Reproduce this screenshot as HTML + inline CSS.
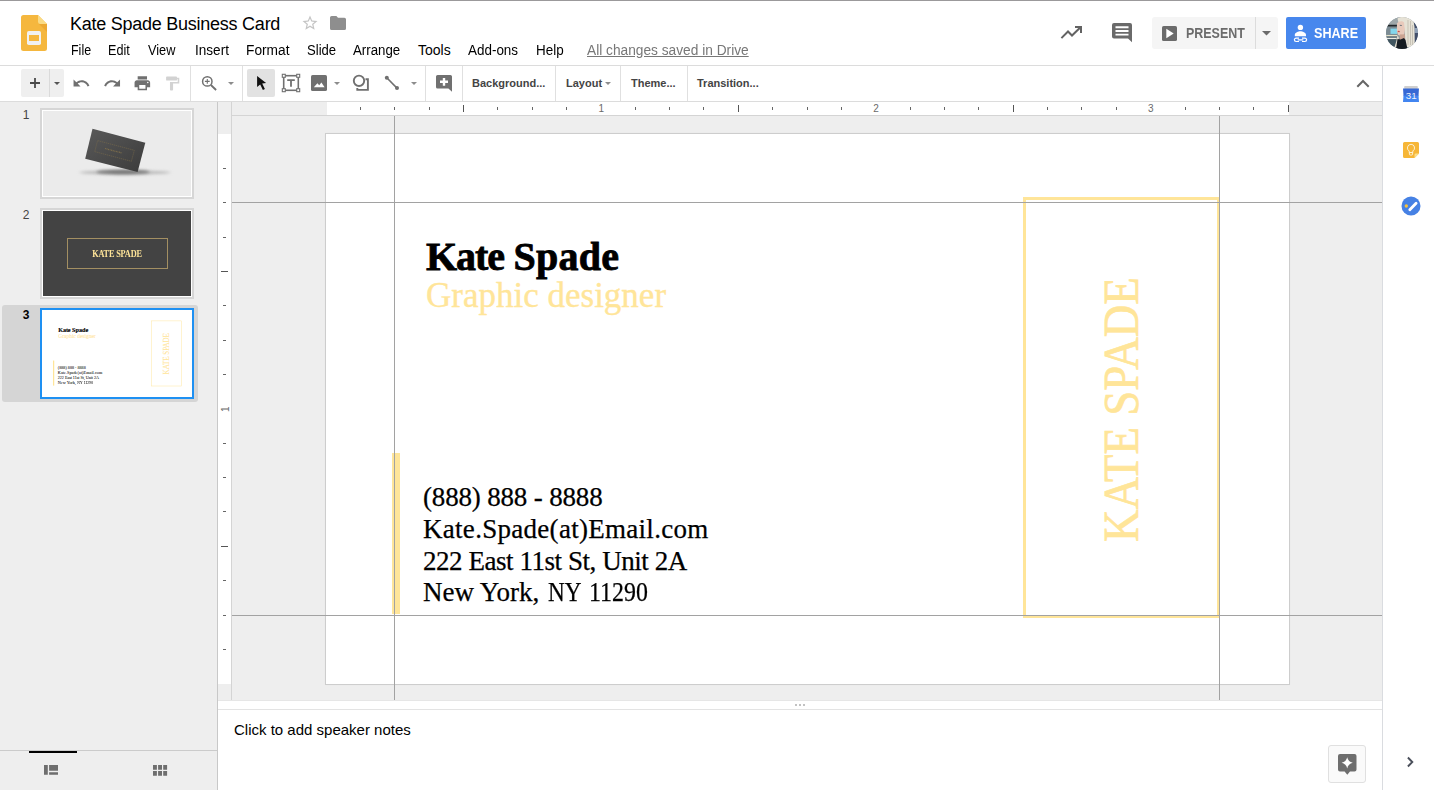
<!DOCTYPE html>
<html><head><meta charset="utf-8"><title>Kate Spade Business Card</title>
<style>
*{box-sizing:border-box;margin:0;padding:0}
html,body{width:1434px;height:790px;overflow:hidden;background:#fff;font-family:"Liberation Sans",sans-serif;color:#000}
.abs,body>div,body>svg{position:absolute}
#topline{left:0;top:0;width:1434px;height:1px;background:#9b999b}
#hdrborder{left:0;top:65px;width:1434px;height:1px;background:#dcdcdc}
#title{left:70px;top:12.500px;font-size:18px;line-height:22px;letter-spacing:-.25px;white-space:nowrap;color:#000}
.menu{position:absolute;transform-origin:0 0;top:41px;font-size:14px;line-height:18px;white-space:nowrap;color:#000}
#saved{color:#777;text-decoration:underline}
#tbborder{left:0;top:101px;width:1383px;height:1px;background:#dcdcdc}
.tsep{position:absolute;top:66px;width:1px;height:35px;background:#e0e0e0}
.tbtxt{position:absolute;top:75px;font-size:11px;line-height:16px;font-weight:bold;color:#444;white-space:nowrap}
.dd{position:absolute;top:82px;width:0;height:0;border-left:3px solid transparent;border-right:3px solid transparent;border-top:3px solid #8c8c8c}
#left{left:0;top:102px;width:217px;height:688px;background:#eeeeee}
#leftborder{left:217px;top:102px;width:1px;height:688px;background:#c8c8c8}
#canvas{left:218px;top:102px;width:1164px;height:598px;background:#eeeeee}
#rightborder{left:1382px;top:66px;width:1px;height:724px;background:#dadce0}
#slide{left:326px;top:134px;width:963px;height:550px;background:#fff;box-shadow:0 0 0 1px #cdcdcd,0 0 2px rgba(0,0,0,.15)}
#slidecontent{top:-1px}
.sc{position:absolute;left:0;top:0;width:963px;height:552px;overflow:hidden;font-family:"Liberation Serif",serif}
.sc div{position:absolute;white-space:nowrap}
.gold{color:#ffe599}
.name{left:100px;top:100.500px;font-size:40px;line-height:46px;letter-spacing:-.3px;font-weight:bold;color:#000;-webkit-text-stroke:.8px #000}
.role{left:100px;top:143px;font-size:35px;line-height:40px;-webkit-text-stroke:.35px #ffe599}
.ct{left:97px;font-size:27px;line-height:32px;color:#000;-webkit-text-stroke:.25px #000}
.bar{left:65.700px;top:320px;width:8.500px;height:161px;background:#ffe599}
.box{left:697px;top:64px;width:197px;height:421px;border:3px solid #ffe599}
.vert{left:0;top:0;font-size:50px;line-height:50px;transform-origin:0 0;-webkit-text-stroke:.7px #ffe599}
#notes{left:218px;top:700px;width:1164px;height:90px;background:#fff}
#notesline{left:218px;top:709px;width:1164px;height:1px;background:#e3e3e3}
#notestxt{left:234px;top:721px;font-size:15px;line-height:18px;white-space:nowrap;color:#000}
.guide{background:#a2a2a2}
.thumb{position:absolute;left:40px;width:154px;height:91px;border:2px solid #d6d6d6;background:#fff}
.thumb>i{font-style:normal;position:absolute;left:1px;top:1px;right:1px;bottom:1px;display:block;overflow:hidden}
.num{position:absolute;left:18px;width:16px;text-align:center;font-size:12px;line-height:14px;color:#444}
</style></head><body>
<div id="topline"></div>
<div id="hdrborder"></div>
<div id="title">Kate Spade Business Card</div>
<div class="menu" style="left:71px;transform:scaleX(0.89)">File</div>
<div class="menu" style="left:108px;transform:scaleX(0.9)">Edit</div>
<div class="menu" style="left:148px;transform:scaleX(0.91)">View</div>
<div class="menu" style="left:195px;transform:scaleX(0.97)">Insert</div>
<div class="menu" style="left:246px;transform:scaleX(0.98)">Format</div>
<div class="menu" style="left:307px;transform:scaleX(0.935)">Slide</div>
<div class="menu" style="left:353px;transform:scaleX(0.947)">Arrange</div>
<div class="menu" style="left:418px;transform:scaleX(1.0)">Tools</div>
<div class="menu" style="left:468px;transform:scaleX(0.96)">Add-ons</div>
<div class="menu" style="left:536px;transform:scaleX(0.96)">Help</div>
<div class="menu" id="saved" style="left:587px;transform:scaleX(.98)">All changes saved in Drive</div>
<div id="tbborder"></div>
<div class="tsep" style="left:190px"></div>
<div class="tsep" style="left:242px"></div>
<div class="tsep" style="left:425px"></div>
<div class="tsep" style="left:462px"></div>
<div class="tsep" style="left:555px"></div>
<div class="tsep" style="left:620px"></div>
<div class="tsep" style="left:687px"></div>
<div class="tbtxt" style="left:472px">Background...</div>
<div class="tbtxt" style="left:566px">Layout</div>
<div class="tbtxt" style="left:631px">Theme...</div>
<div class="tbtxt" style="left:697px">Transition...</div>

<!-- logo -->
<svg style="left:21px;top:15px" width="26" height="36" viewBox="0 0 26 36"><path d="M2.5 0H17l9 9v24.5a2.5 2.5 0 0 1-2.500 2.500h-21A2.500 2.500 0 0 1 0 33.500v-31A2.500 2.500 0 0 1 2.500 0z" fill="#f5b73e"/><path d="M17.500 8.500 26 17V9z" fill="#eca832"/><path d="M17 0l9 9h-6.800A2.200 2.200 0 0 1 17 6.800z" fill="#fadb85"/><rect x="6" y="16" width="14" height="14" rx="1.800" fill="#f1f1f1"/><rect x="8" y="20" width="10" height="6" fill="#f5b73e"/></svg>
<!-- star + folder -->
<svg style="left:301.200px;top:13.500px" width="18" height="18" viewBox="0 0 24 24"><path d="M22 9.240l-7.190-.62L12 2 9.190 8.630 2 9.240l5.460 4.730L5.820 21 12 17.270 18.180 21l-1.630-7.030L22 9.240zM12 15.400l-3.760 2.270 1-4.280-3.320-2.880 4.380-.38L12 6.100l1.710 4.040 4.380.38-3.320 2.880 1 4.280L12 15.400z" fill="#c4c4c4"/></svg>
<svg style="left:330px;top:16px" width="16" height="14" viewBox="0 0 16 14"><path d="M1.600 0h4.800L8 1.700h6.400A1.600 1.600 0 0 1 16 3.300v9.100a1.600 1.600 0 0 1-1.600 1.600H1.600A1.600 1.600 0 0 1 0 12.400V1.600A1.600 1.600 0 0 1 1.600 0z" fill="#8e8e8e"/></svg>
<!-- header right -->
<svg style="left:1059px;top:24px" width="24" height="17" viewBox="0 0 24 17"><path d="M2.400 14.100 9 7.500l4 4L21 3.700" fill="none" stroke="#636363" stroke-width="2"/><path d="M16 3h6v6" fill="none" stroke="#636363" stroke-width="2"/></svg>
<svg style="left:1112px;top:23px" width="20" height="20" viewBox="0 0 20 20"><path d="M2 0h16a2 2 0 0 1 2 2v17.200l-4-3.700H2a2 2 0 0 1-2-2V2a2 2 0 0 1 2-2z" fill="#6a6a6a"/><path d="M3.500 3.300h13v1.900h-13zM3.500 7h13v1.900h-13zM3.500 10.700h13v1.900h-13z" fill="#fff"/></svg>
<div style="left:1152px;top:17px;width:126px;height:32px;background:#f5f5f5;border-radius:3px"></div>
<div style="left:1255px;top:17px;width:1px;height:32px;background:#dcdcdc"></div>
<svg style="left:1162px;top:26px" width="15" height="15" viewBox="0 0 15 15"><rect width="15" height="15" rx="1.600" fill="#6b6b6b"/><path d="M4.300 2.800v9.400l7.400-4.700z" fill="#fff"/></svg>
<div id="present" style="left:1186px;top:25px;font-size:14px;line-height:16px;font-weight:bold;color:#6b6b6b;white-space:nowrap;transform:scaleX(.89);transform-origin:0 0">PRESENT</div>
<svg style="left:1262px;top:31px" width="9" height="5" viewBox="0 0 9 5"><path d="M0 0h9L4.500 4.500z" fill="#6b6b6b"/></svg>
<div style="left:1286px;top:17px;width:80px;height:32px;background:#4787ed;border-radius:2px"></div>
<svg style="left:1293px;top:24px" width="15" height="19" viewBox="0 0 15 19"><circle cx="7.400" cy="3.400" r="2.700" fill="#fff"/><path d="M1.800 12.300v-1.600c0-2.300 3.700-3.500 5.600-3.500s5.600 1.200 5.600 3.500v1.600z" fill="#fff"/><path d="M6 14.100H3.100a1.700 1.700 0 0 0 0 3.400H6M9 14.100h2.900a1.700 1.700 0 0 1 0 3.400H9M4.700 15.800h5.600" fill="none" stroke="#fff" stroke-width="1.200"/></svg>
<div id="share" style="left:1314px;top:25px;font-size:14px;line-height:16px;font-weight:bold;color:#fff;white-space:nowrap;transform:scaleX(.9);transform-origin:0 0">SHARE</div>

<svg style="left:1386px;top:17px" width="32" height="32" viewBox="0 0 32 32"><defs><clipPath id="ac"><circle cx="16" cy="16" r="16"/></clipPath><filter id="ab" x="-20%" y="-20%" width="140%" height="140%"><feGaussianBlur stdDeviation=".75"/></filter></defs><g clip-path="url(#ac)"><rect width="32" height="32" fill="#8b969b"/><g filter="url(#ab)"><rect x="0" y="0" width="12" height="7.500" fill="#9ea7aa"/><rect x="1" y="7.800" width="10.500" height="1.900" fill="#23282c"/><rect x="0" y="9.700" width="12" height="8" fill="#7b8b93"/><rect x="4.500" y="11.600" width="6.800" height="5.300" fill="#84d6ec"/><rect x="0" y="18" width="11" height="1.100" fill="#e3e2c8"/><rect x="0" y="19.300" width="11" height="1.500" fill="#6b7a80"/><rect x="0" y="21" width="10.500" height="1" fill="#ecece6"/><rect x="1" y="22.200" width="11" height="8" fill="#3f545f"/><rect x="27.500" y="4" width="5" height="22" fill="#42506b"/><rect x="28.500" y="11" width="3.500" height="5" fill="#8fa0b6"/><path d="M11.500 1.500C14 -1 24 -1 27 1l1.500 9 .3 20H19.500l-.5-12-1-7-1.500-5.500-4 .5z" fill="#e6e2d6"/><path d="M22 3v25M24.500 4v24M26.500 8v20" stroke="#b9b5a8" stroke-width=".7" fill="none"/><path d="M11 6.500c1.500-2.500 5.500-3 7-1l.8 7-.5 5-3.300 1.500-3.200-1.200-.9-4.300z" fill="#e8c9bb"/><path d="M13.800 17.400h5.200v6h-5.200z" fill="#caa392"/><path d="M11.500 18c-.5 4-1.500 8-3 12h3l1.500-9z" fill="#e1dccd"/><path d="M11.500 22l3 .5 3.500-1.500 1.500 2 2 9H10z" fill="#191a22"/><path d="M13.800 8.300l2 .2" stroke="#5d6b78" stroke-width=".9"/><path d="M11.800 14.300l1.900.4" stroke="#c6554d" stroke-width="1.300"/></g></g></svg>
<!-- toolbar icons -->
<div style="left:21px;top:69px;width:43px;height:28px;background:#efefef;border-radius:2px"></div>
<div style="left:49px;top:69px;width:1px;height:28px;background:#dadada"></div>
<svg style="left:29px;top:77px" width="12" height="12" viewBox="0 0 12 12"><path d="M5.100 1h1.800v4.100H11v1.800H6.900V11H5.100V6.900H1V5.100h4.100z" fill="#4a4a4a"/></svg>
<div class="dd" style="left:54px;border-top-color:#555"></div>
<svg style="left:72.350px;top:73.500px" width="18.600" height="18.600" viewBox="0 0 24 24"><path d="M12.500 8c-2.650 0-5.050.99-6.900 2.600L2 7v9h9l-3.620-3.620c1.390-1.160 3.160-1.880 5.120-1.880 3.540 0 6.550 2.310 7.600 5.500l2.370-.78C21.080 11.030 17.150 8 12.500 8z" fill="#707070"/></svg>
<svg style="left:102.900px;top:73.500px" width="18.600" height="18.600" viewBox="0 0 24 24"><path d="M18.400 10.600C16.550 8.990 14.150 8 11.500 8c-4.650 0-8.580 3.030-9.960 7.220L3.900 16c1.050-3.190 4.050-5.500 7.600-5.500 1.950 0 3.730.72 5.120 1.880L13 16h9V7l-3.600 3.600z" fill="#707070"/></svg>
<svg style="left:132.500px;top:73.700px" width="18.700" height="18.700" viewBox="0 0 24 24"><path d="M19 8H5c-1.660 0-3 1.340-3 3v6h4v4h12v-4h4v-6c0-1.660-1.340-3-3-3zm-3 11H8v-5h8v5zm3-7c-.55 0-1-.45-1-1s.45-1 1-1 1 .45 1 1-.45 1-1 1zm-1-9H6v4h12V3z" fill="#707070"/></svg>
<svg style="left:163px;top:74.500px" width="18.600" height="16.800" viewBox="0 0 24 24" preserveAspectRatio="none"><path d="M18 4V3c0-.55-.45-1-1-1H5c-.55 0-1 .45-1 1v4c0 .55.45 1 1 1h12c.55 0 1-.45 1-1V6h1v4H9v11c0 .55.450 1 1 1h2c.550 0 1-.45 1-1v-9h8V4h-3z" fill="#d2d2d2"/></svg>
<svg style="left:200px;top:74px" width="19" height="19" viewBox="0 0 19 19"><circle cx="7.300" cy="7.400" r="4.700" fill="none" stroke="#707070" stroke-width="1.500"/><path d="M10.900 11l5.200 5" stroke="#707070" stroke-width="1.800" fill="none"/><path d="M4.900 7.400h4.800M7.300 5v4.800" stroke="#707070" stroke-width="1.100" fill="none"/></svg>
<div class="dd" style="left:228px"></div>
<div style="left:247px;top:69px;width:28px;height:28px;background:#e2e2e2;border-radius:2px"></div>
<svg style="left:255px;top:74px" width="14" height="18" viewBox="0 0 14 18"><path d="M2.100 2v10.900l3.100-2.500 2.700 5.600 2-1-2.700-5.400 3.900-.5z" fill="#111"/></svg>
<svg style="left:281px;top:73px" width="20" height="20" viewBox="0 0 20 20"><rect x="2.700" y="2.700" width="14.600" height="14.600" fill="none" stroke="#707070" stroke-width="1.600"/><g fill="#fff" stroke="#707070" stroke-width="1.100"><rect x="1.300" y="1.300" width="3" height="3"/><rect x="15.700" y="1.300" width="3" height="3"/><rect x="1.300" y="15.700" width="3" height="3"/><rect x="15.700" y="15.700" width="3" height="3"/></g><path d="M6.200 6.300h7.600v1.700h-2.900v5.800H9.100V8H6.200z" fill="#707070"/></svg>
<svg style="left:311px;top:75px" width="16" height="16" viewBox="0 0 16 16"><rect width="16" height="16" rx="1.600" fill="#707070"/><path d="M2.800 12.200l3.600-4 1.800 2.100 2.200-2.900 3.200 4.800z" fill="#fff"/></svg>
<div class="dd" style="left:334px"></div>
<svg style="left:352px;top:74px" width="18" height="18" viewBox="0 0 18 18"><circle cx="7" cy="6.800" r="5.200" fill="none" stroke="#707070" stroke-width="1.900"/><path d="M13.500 5.300h2.400v10.600H5.300v-2" fill="none" stroke="#707070" stroke-width="1.900"/></svg>
<svg style="left:383px;top:74px" width="18" height="18" viewBox="0 0 18 18"><path d="M3.800 3.800l10.200 10.300" stroke="#707070" stroke-width="1.600"/><circle cx="3.800" cy="3.800" r="2" fill="#707070"/><circle cx="14" cy="14.100" r="2" fill="#707070"/></svg>
<div class="dd" style="left:411px"></div>
<svg style="left:436px;top:75px" width="16" height="17" viewBox="0 0 16 17"><path d="M1.600 0h12.800A1.600 1.600 0 0 1 16 1.600v15.100l-3.600-3.100H1.600A1.600 1.600 0 0 1 0 12V1.600A1.600 1.600 0 0 1 1.600 0z" fill="#707070"/><path d="M6.800 3h2.400v2.600h2.800v2.300H9.200v2.800H6.800V7.900H4V5.600h2.800z" fill="#fff"/></svg>
<div class="dd" style="left:605px"></div>
<svg style="left:1356px;top:79px" width="14" height="9" viewBox="0 0 14 9"><path d="M1.300 7.700L7 2l5.700 5.700" fill="none" stroke="#666" stroke-width="2"/></svg>
<div id="left"></div>

<div style="left:2px;top:305px;width:196px;height:97px;background:#d5d5d5;border-radius:3px"></div>
<div class="num" style="top:108px">1</div>
<div class="num" style="top:208px">2</div>
<div class="num" style="top:308px;font-weight:bold;color:#000">3</div>
<div class="thumb" style="top:108px"><i style="background:#ebebeb">
<svg style="position:absolute;left:0;top:0" width="148" height="85" viewBox="0 0 148 85"><defs><filter id="bl" x="-50%" y="-200%" width="200%" height="500%"><feGaussianBlur stdDeviation="1.700"/></filter><linearGradient id="cg" x1="0" y1="0" x2="1" y2="1"><stop offset="0" stop-color="#5a5a5a"/><stop offset="1" stop-color="#3b3b3b"/></linearGradient></defs><ellipse cx="82" cy="61.500" rx="46" ry="2.200" fill="#bdbdbd" filter="url(#bl)"/><ellipse cx="80" cy="61" rx="27" ry="2.200" fill="#777" filter="url(#bl)"/><path d="M49.500 17.800 102.300 31.700 94.600 61.100 42.200 47.800z" fill="url(#cg)"/><path d="M54.600 29.600 91.300 39.300 88.400 50.300 51.700 40.600z" fill="none" stroke="#7f6f4b" stroke-width=".5" stroke-dasharray="1.400 .7"/><path d="M62 37.500l17 4.500" stroke="#7f6f4b" stroke-width="1.200" stroke-dasharray="1 .6"/></svg>
</i></div>
<div class="thumb" style="top:208px"><i style="background:#434343">
<span style="position:absolute;left:24px;top:27px;width:101px;height:31px;border:1px solid #a38f62"></span>
<span style="position:absolute;left:0;top:37px;width:148px;text-align:center;font-family:'Liberation Serif',serif;font-weight:bold;font-size:9.500px;line-height:12px;color:#ffe599;letter-spacing:-.2px;transform:scaleX(.87)">KATE SPADE</span>
</i></div>
<div style="left:40px;top:308px;width:154px;height:91px;background:#fff;border:2px solid #1e90f2"></div>
<div id="t3" style="left:42px;top:310px;width:150px;height:87px;overflow:hidden"><div class="sc" style="transform:translate(.7px,.7px) scale(.15576);transform-origin:0 0">
<div class="name"><span style="letter-spacing:-1.100px">Kate</span> <span style="letter-spacing:.25px">Spade</span></div>
<div class="role gold">Graphic designer</div>
<div class="bar"></div>
<div class="ct" style="top:348px;letter-spacing:-.17px">(888) 888 - 8888</div>
<div class="ct" style="top:380px;letter-spacing:.29px">Kate.Spade(at)Email.com</div>
<div class="ct" style="top:412px;letter-spacing:-.45px">222 East 11st St, Unit 2A</div>
<div class="ct" style="top:443px">New York,&nbsp;</div><div class="ct" style="top:443px;left:222.400px;transform:scaleX(.86);transform-origin:0 0">NY</div><div class="ct" style="top:443px;left:263.300px;transform:scaleX(.885);transform-origin:0 0">11290</div>
<div class="box"></div>
<div class="vert gold" style="transform:translate(770px,409px) rotate(-90deg) scale(.9,1)">KATE SPADE</div>
</div></div>
<div style="left:0;top:750px;width:217px;height:1px;background:#cbcbcb"></div>
<div style="left:29px;top:751px;width:48px;height:2px;background:#000"></div>
<svg style="left:44px;top:765px" width="15" height="11" viewBox="0 0 15 11"><path d="M0 .1h3.800v9.700H0zM5.100 .1H14v5.700H5.100zM5.100 7.200H14v2.600H5.100z" fill="#6e6e6e"/></svg>
<svg style="left:153px;top:765px" width="15" height="11" viewBox="0 0 15 11"><path d="M0 .1h3.900v4.600H0zM5.100 .1h3.900v4.600h-3.900zM10.200 .1h3.900v4.600h-3.900zM0 6.100h3.900v4.700H0zM5.100 6.100h3.900v4.700h-3.900zM10.200 6.100h3.900v4.700h-3.900z" fill="#6e6e6e"/></svg>
<div id="leftborder"></div>
<div id="canvas"></div>
<div style="left:218px;top:102px;width:1164px;height:13px;background:#eeeeee"></div>
<div style="left:327px;top:102px;width:962px;height:13px;background:#fff"></div>
<div style="left:218px;top:115px;width:1164px;height:1px;background:#d4d4d4"></div>
<div style="left:218px;top:102px;width:13px;height:598px;background:#eeeeee"></div>
<div style="left:218px;top:134px;width:13px;height:550px;background:#fff"></div>
<div style="left:231px;top:102px;width:1px;height:598px;background:#d4d4d4"></div>
<svg style="left:0;top:0" width="1434" height="116" viewBox="0 0 1434 116"><rect x="360" y="107" width="1" height="3" fill="#666"/><rect x="394" y="107" width="1" height="3" fill="#666"/><rect x="429" y="107" width="1" height="3" fill="#666"/><rect x="463" y="105" width="1" height="7" fill="#555"/><rect x="497" y="107" width="1" height="3" fill="#666"/><rect x="532" y="107" width="1" height="3" fill="#666"/><rect x="566" y="107" width="1" height="3" fill="#666"/><text x="601.2" y="112" font-size="10" fill="#6a6a6a" text-anchor="middle" font-family="Liberation Sans, sans-serif">1</text><rect x="635" y="107" width="1" height="3" fill="#666"/><rect x="669" y="107" width="1" height="3" fill="#666"/><rect x="703" y="107" width="1" height="3" fill="#666"/><rect x="738" y="105" width="1" height="7" fill="#555"/><rect x="772" y="107" width="1" height="3" fill="#666"/><rect x="807" y="107" width="1" height="3" fill="#666"/><rect x="841" y="107" width="1" height="3" fill="#666"/><text x="876.1" y="112" font-size="10" fill="#6a6a6a" text-anchor="middle" font-family="Liberation Sans, sans-serif">2</text><rect x="910" y="107" width="1" height="3" fill="#666"/><rect x="944" y="107" width="1" height="3" fill="#666"/><rect x="978" y="107" width="1" height="3" fill="#666"/><rect x="1013" y="105" width="1" height="7" fill="#555"/><rect x="1047" y="107" width="1" height="3" fill="#666"/><rect x="1081" y="107" width="1" height="3" fill="#666"/><rect x="1116" y="107" width="1" height="3" fill="#666"/><text x="1150.9" y="112" font-size="10" fill="#6a6a6a" text-anchor="middle" font-family="Liberation Sans, sans-serif">3</text><rect x="1185" y="107" width="1" height="3" fill="#666"/><rect x="1219" y="107" width="1" height="3" fill="#666"/><rect x="1253" y="107" width="1" height="3" fill="#666"/><rect x="1288" y="105" width="1" height="7" fill="#555"/></svg>
<svg style="left:0;top:0" width="240" height="700" viewBox="0 0 240 700"><rect x="223" y="168" width="3" height="1" fill="#666"/><rect x="223" y="202" width="3" height="1" fill="#666"/><rect x="223" y="237" width="3" height="1" fill="#666"/><rect x="221" y="271" width="7" height="1" fill="#555"/><rect x="223" y="305" width="3" height="1" fill="#666"/><rect x="223" y="340" width="3" height="1" fill="#666"/><rect x="223" y="374" width="3" height="1" fill="#666"/><text transform="translate(229,409.2) rotate(-90)" font-size="10" fill="#6a6a6a" text-anchor="middle" font-family="Liberation Sans, sans-serif">1</text><rect x="223" y="443" width="3" height="1" fill="#666"/><rect x="223" y="477" width="3" height="1" fill="#666"/><rect x="223" y="511" width="3" height="1" fill="#666"/><rect x="221" y="546" width="7" height="1" fill="#555"/><rect x="223" y="580" width="3" height="1" fill="#666"/><rect x="223" y="615" width="3" height="1" fill="#666"/><rect x="223" y="649" width="3" height="1" fill="#666"/></svg>
<div id="slide"><div class="sc" id="slidecontent">
<div class="name"><span style="letter-spacing:-1.100px">Kate</span> <span style="letter-spacing:.25px">Spade</span></div>
<div class="role gold">Graphic designer</div>
<div class="bar"></div>
<div class="ct" style="top:348px;letter-spacing:-.17px">(888) 888 - 8888</div>
<div class="ct" style="top:380px;letter-spacing:.29px">Kate.Spade(at)Email.com</div>
<div class="ct" style="top:412px;letter-spacing:-.45px">222 East 11st St, Unit 2A</div>
<div class="ct" style="top:443px">New York,&nbsp;</div><div class="ct" style="top:443px;left:222.400px;transform:scaleX(.86);transform-origin:0 0">NY</div><div class="ct" style="top:443px;left:263.300px;transform:scaleX(.885);transform-origin:0 0">11290</div>
<div class="box"></div>
<div class="vert gold" style="transform:translate(770px,409px) rotate(-90deg) scale(.9,1)">KATE SPADE</div>
</div></div>

<div class="guide" style="left:394px;top:116px;width:1px;height:584px"></div>
<div class="guide" style="left:1219px;top:116px;width:1px;height:584px"></div>
<div class="guide" style="left:232px;top:202px;width:1150px;height:1px"></div>
<div class="guide" style="left:232px;top:615px;width:1150px;height:1px"></div>
<div id="notes"></div>
<div id="notesline"></div>
<div id="notestxt">Click to add speaker notes</div>

<div style="left:1328px;top:745px;width:38px;height:38px;background:#fafafa;border:1px solid #e0e0e0;border-radius:3px"></div>
<svg style="left:1338px;top:754px" width="19" height="22" viewBox="0 0 19 22"><path d="M2 0h14.500a2 2 0 0 1 2 2v13.500a2 2 0 0 1-2 2H12l-2.700 3.300-2.700-3.300H2a2 2 0 0 1-2-2V2a2 2 0 0 1 2-2z" fill="#6e6e6e"/><path d="M9.200 3.200Q10.200 7.800 14.800 8.800Q10.200 9.800 9.200 14.400Q8.200 9.800 3.600 8.800Q8.200 7.800 9.200 3.200z" fill="#fff"/></svg>
<svg style="left:1405px;top:755px" width="10" height="14" viewBox="0 0 10 14"><path d="M2.900 2.500l4.400 4.500-4.400 4.500" fill="none" stroke="#4a4f5a" stroke-width="1.900"/></svg>
<div style="left:795px;top:704px;width:2px;height:2px;background:#c2c2c2;box-shadow:4px 0 0 #c2c2c2,8px 0 0 #c2c2c2"></div>
<div style="left:218px;top:700px;width:1164px;height:1px;background:#e6e6e6"></div>
<!-- side icons -->
<svg style="left:1402px;top:85px" width="18" height="18" viewBox="0 0 18 18"><rect x="2.200" y="1" width="13.600" height="3" rx=".8" fill="#cfcfcf"/><path d="M1 3.600h16l-.5 7.300H1.500z" fill="#3768d4"/><path d="M1.500 10.500h15l.5 6.500H1z" fill="#4285f0"/><text x="9.200" y="14.200" font-size="9.800" fill="#eef2fb" text-anchor="middle" font-family="Liberation Sans, sans-serif">31</text></svg>
<svg style="left:1403px;top:142px" width="16" height="16" viewBox="0 0 16 16"><path d="M1.500 0h13A1.500 1.500 0 0 1 16 1.500V11.500l-4.500 4.500H1.500A1.500 1.500 0 0 1 0 14.500v-13A1.500 1.500 0 0 1 1.500 0z" fill="#f6b637"/><path d="M16 11.500l-4.500 4.500v-3.200A1.300 1.300 0 0 1 12.800 11.500z" fill="#fbe08c"/><path d="M8 2.300a3.600 3.600 0 0 0-1.800 6.700v1.500h3.600V9A3.600 3.600 0 0 0 8 2.300zM6.400 10.500v1.600a.9.900 0 0 0 .9.900h1.400a.9.900 0 0 0 .9-.9v-1.600" fill="none" stroke="#fdf6e3" stroke-width=".9"/></svg>
<svg style="left:1401px;top:196px" width="20" height="20" viewBox="0 0 20 20"><circle cx="10" cy="10" r="9.500" fill="#4681e4"/><circle cx="5.300" cy="10" r="1.700" fill="#f7c13c"/><path d="M8.800 13.800l6.300-6.600" stroke="#fff" stroke-width="2.800" stroke-linecap="round"/></svg>
<div id="rightborder"></div>
</body></html>
